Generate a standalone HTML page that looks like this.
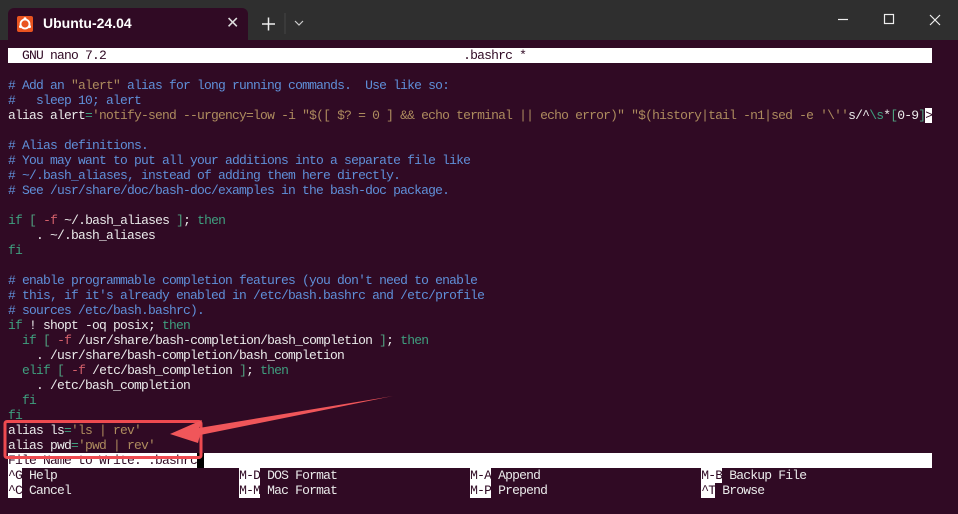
<!DOCTYPE html>
<html><head><meta charset="utf-8"><style>
html,body{margin:0;padding:0;}
body{width:958px;height:514px;background:#300a24;position:relative;overflow:hidden;font-family:"Liberation Sans",sans-serif;}
.tb{position:absolute;left:0;top:0;width:958px;height:40px;background:#2f2f2f;}
.tab{position:absolute;left:8px;top:8px;width:240px;height:32px;background:#300a24;border-radius:6px 6px 0 0;}
.tab .ic{position:absolute;left:9px;top:8px;width:16px;height:16px;background:#e95420;border-radius:2px;}
.tab .t{position:absolute;left:35px;top:7px;color:#fff;font-weight:bold;font-size:14px;}
.tab .x{position:absolute;left:218px;top:5px;color:#ddd;font-size:16px;}
pre{position:absolute;left:8px;top:48px;margin:0;font-family:"Liberation Mono",monospace;font-size:13px;letter-spacing:-0.8px;line-height:15px;color:#eaeaea;white-space:pre;}
.c{color:#5f8fd8}.s{color:#ad8b5e}.k{color:#3f9f7f}.r{color:#d25f6a}.g{color:#4fa07f}
.bar{display:inline-block;background:#fff;color:#300a24;width:924px;overflow:hidden;vertical-align:top;}
.h{background:#fff;color:#300a24;}
</style></head><body>
<div class="tb"></div>
<div class="tab"><div class="ic"><svg width="16" height="16"><circle cx="8" cy="8" r="4.5" fill="none" stroke="#fff" stroke-width="1.8"/><circle cx="8" cy="2.8" r="1.5" fill="#fff"/><circle cx="3.5" cy="10.6" r="1.5" fill="#fff"/><circle cx="12.5" cy="10.6" r="1.5" fill="#fff"/></svg></div><div class="t">Ubuntu-24.04</div><div class="x">✕</div></div>
<svg style="position:absolute;left:0;top:0" width="958" height="40">
<path d="M262 24h13M268.5 17.5v13" stroke="#eee" stroke-width="1.5"/>
<line x1="285" y1="13" x2="285" y2="34" stroke="#444"/>
<path d="M295 21l4 4 4-4" stroke="#ccc" fill="none" stroke-width="1.2"/>
<path d="M838 19.5h10" stroke="#eee" stroke-width="1.2"/>
<rect x="884.5" y="14.5" width="9" height="9" fill="none" stroke="#eee" stroke-width="1.2"/>
<path d="M930 15l10 10M940 15l-10 10" stroke="#eee" stroke-width="1.2"/>
</svg>
<pre><span class="bar">  GNU nano 7.2                                                   .bashrc *                                                       </span>

<span class="c"># Add an <span class="s">"alert"</span> alias for long running commands.  Use like so:</span>
<span class="c">#   sleep 10; alert</span>
alias alert<span class="k">=</span><span class="s">'notify-send --urgency=low -i "$([ $? = 0 ] &amp;&amp; echo terminal || echo error)" "$(history|tail -n1|sed -e '\''</span>s/^<span class="k">\s</span>*<span class="g">[</span>0-9<span class="g">]</span><span class="h">&gt;</span>

<span class="c"># Alias definitions.</span>
<span class="c"># You may want to put all your additions into a separate file like</span>
<span class="c"># ~/.bash_aliases, instead of adding them here directly.</span>
<span class="c"># See /usr/share/doc/bash-doc/examples in the bash-doc package.</span>

<span class="k">if</span> <span class="g">[</span> <span class="r">-f</span> ~/.bash_aliases <span class="g">]</span>; <span class="k">then</span>
    . ~/.bash_aliases
<span class="k">fi</span>

<span class="c"># enable programmable completion features (you don't need to enable</span>
<span class="c"># this, if it's already enabled in /etc/bash.bashrc and /etc/profile</span>
<span class="c"># sources /etc/bash.bashrc).</span>
<span class="k">if</span> ! shopt -oq posix; <span class="k">then</span>
  <span class="k">if</span> <span class="g">[</span> <span class="r">-f</span> /usr/share/bash-completion/bash_completion <span class="g">]</span>; <span class="k">then</span>
    . /usr/share/bash-completion/bash_completion
  <span class="k">elif</span> <span class="g">[</span> <span class="r">-f</span> /etc/bash_completion <span class="g">]</span>; <span class="k">then</span>
    . /etc/bash_completion
  <span class="k">fi</span>
<span class="k">fi</span>
alias ls<span class="k">=</span><span class="s">'ls | rev'</span>
alias pwd<span class="k">=</span><span class="s">'pwd | rev'</span>
<span class="bar">File Name to Write: .bashrc<span style="background:#000;color:#000"> </span>                                                                                                  </span>
<span class="h">^G</span> Help                          <span class="h">M-D</span> DOS Format                   <span class="h">M-A</span> Append                       <span class="h">M-B</span> Backup File
<span class="h">^C</span> Cancel                        <span class="h">M-M</span> Mac Format                   <span class="h">M-P</span> Prepend                      <span class="h">^T</span> Browse</pre>
<svg style="position:absolute;left:0;top:0" width="958" height="514">
<rect x="5" y="421.5" width="196" height="36" rx="2" fill="none" stroke="#ee4a50" stroke-width="3"/>
<polygon points="170,434 202,420 199,428 393,396 200,435 198,443" fill="#f0565a"/>
</svg>
</body></html>
